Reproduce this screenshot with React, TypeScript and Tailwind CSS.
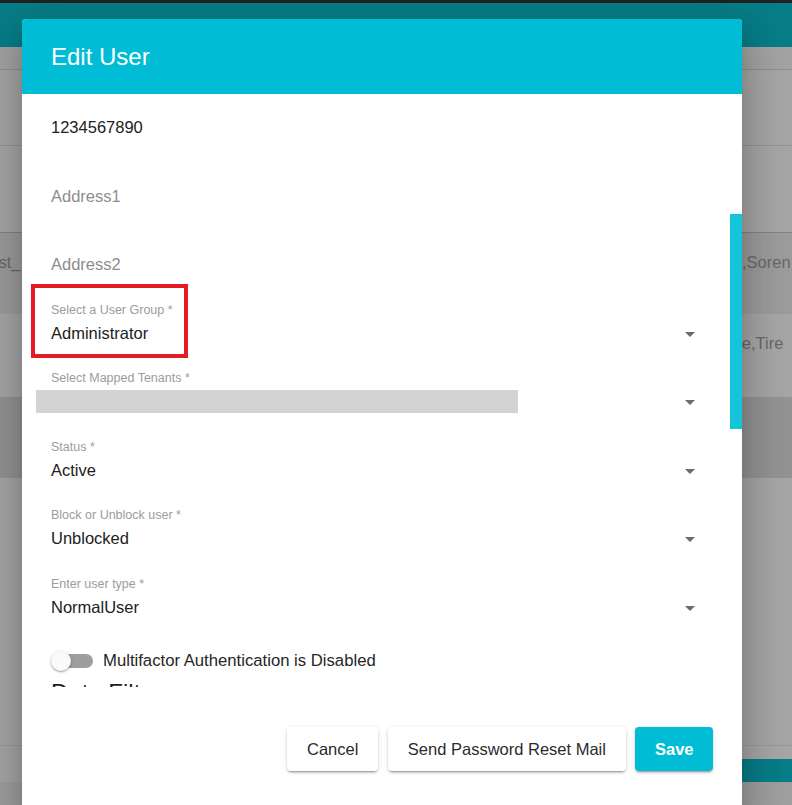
import React from 'react';

type Field = {
  label?: string;
  value: string;
  placeholder?: boolean;
  select?: boolean;
  masked?: boolean;
};

const fields: Field[] = [
  { value: '1234567890' },
  { value: 'Address1', placeholder: true },
  { value: 'Address2', placeholder: true },
  { label: 'Select a User Group *', value: 'Administrator', select: true },
  { label: 'Select Mapped Tenants *', value: '', select: true, masked: true },
  { label: 'Status *', value: 'Active', select: true },
  { label: 'Block or Unblock user *', value: 'Unblocked', select: true },
  { label: 'Enter user type *', value: 'NormalUser', select: true },
];

const ArrowDrop = () => (
  <svg width="24" height="24" viewBox="0 0 24 24" className="shrink-0 mt-[2px]">
    <path d="M7 10l5 5 5-5z" fill="#6b6b6b" />
  </svg>
);

const FormField = ({ field }: { field: Field }) => (
  <div className="h-[68.5px] flex flex-col">
    <div className="h-[16px] text-[12.5px] leading-[16px] text-[#9c9c9c]">{field.label}</div>
    <div className="mt-[3px] h-[24px] flex items-center justify-between">
      {field.masked ? (
        <div className="-ml-[15px] w-[482px] h-[23px] bg-[#d2d3d4]" />
      ) : (
        <span className={`text-[16.5px] leading-[24px] ${field.placeholder ? 'text-[#8d8d8d]' : 'text-[#212121]'}`}>
          {field.value}
        </span>
      )}
      {field.select && <ArrowDrop />}
    </div>
  </div>
);

const PageRow = ({ left, right, leftShift, rightShift, className }: {
  left: string;
  right: string;
  leftShift: string;
  rightShift: string;
  className: string;
}) => (
  <div className={`flex text-[16.5px] leading-[20px] text-[#a2a2a2] pt-[19px] ${className}`}>
    <div className="w-[22px] overflow-hidden shrink-0">
      <span className={`block whitespace-nowrap ${leftShift}`}>{left}</span>
    </div>
    <div className="flex-1" />
    <div className="w-[50px] overflow-hidden shrink-0">
      <span className={`block whitespace-nowrap ${rightShift}`}>{right}</span>
    </div>
  </div>
);

export default function App() {
  return (
    <div className="relative h-[805px] w-full overflow-hidden bg-white font-['Liberation_Sans',Arial,sans-serif]">
      {/* page behind the dialog */}
      <div className="flex flex-col">
        <div className="h-[3px] bg-[#2f3630]" />
        <div className="h-[44px] bg-[#0cc0d2]" />
        <div className="h-[23px] bg-[#fbfbfb] border-b border-[#dcdcdc]" />
        <div className="h-[76px] border-b border-[#e2e2e2]" />
        <div className="h-[87px] border-b border-[#c9c9c9]" />
        <PageRow left="Test_" right=",Soren" leftShift="-ml-[19px]" rightShift="" className="h-[81px] bg-[#f0f0f0]" />
        <PageRow left="" right="Kate,Tire" leftShift="" rightShift="-ml-[25px]" className="h-[83px] bg-white" />
        <div className="h-[81px] bg-[#e2e2e2]" />
        <div className="h-[268px] border-b border-[#ececec]" />
        <div className="h-[13px]" />
        <div className="h-[23px] flex justify-end">
          <div className="w-[320px] bg-[#0cc0d2]" />
        </div>
        <div className="h-[23px] bg-[#f4f4f4]" />
      </div>

      {/* backdrop */}
      <div className="absolute inset-0 bg-black/35" />

      {/* dialog */}
      <div className="absolute left-[22px] top-[19px] w-[720px] h-[800px] flex flex-col bg-white rounded-t-[4px] shadow-[0_11px_15px_-7px_rgba(0,0,0,0.2),0_24px_38px_3px_rgba(0,0,0,0.14),0_9px_46px_8px_rgba(0,0,0,0.12)]">
        <div className="h-[75px] shrink-0 flex items-center px-[29px] bg-[#00bcd4] rounded-t-[4px]">
          <h2 className="text-[24px] text-white">Edit User</h2>
        </div>

        <div className="relative h-[593px] shrink-0 overflow-hidden pl-[29px] pr-[40px] pt-[2px]">
          {fields.map((f, i) => (
            <FormField key={i} field={f} />
          ))}

          <div className="h-[33px] flex items-center">
            <div className="relative w-[44px] h-[24px] flex items-center">
              <div className="ml-[9px] w-[33px] h-[14px] rounded-full bg-[#9e9e9e]" />
              <div className="absolute left-0 top-[2px] w-[20px] h-[20px] rounded-full bg-[#fafafa] shadow-[0_1px_3px_rgba(0,0,0,0.3),0_1px_1px_rgba(0,0,0,0.14)]" />
            </div>
            <span className="ml-[8px] text-[16.7px] text-[#262626]">Multifactor Authentication is Disabled</span>
          </div>

          <h3 className="mt-[2px] text-[24px] leading-[28.8px] text-[#212121]">Data Filters</h3>

          {/* scroll thumb */}
          <div className="absolute right-0 top-[120px] w-[12px] h-[215px] bg-[#14c4d9]" />
        </div>

        <div className="flex justify-end gap-[9.5px] pt-[40px] pr-[29px]">
          <button className="h-[44px] px-[20px] rounded-[4px] bg-white text-[16.5px] text-[#2b2b2b] shadow-[0_3px_1px_-2px_rgba(0,0,0,0.2),0_2px_2px_0_rgba(0,0,0,0.14),0_1px_5px_0_rgba(0,0,0,0.12)]">
            Cancel
          </button>
          <button className="h-[44px] px-[20px] rounded-[4px] bg-white text-[16.5px] text-[#2b2b2b] shadow-[0_3px_1px_-2px_rgba(0,0,0,0.2),0_2px_2px_0_rgba(0,0,0,0.14),0_1px_5px_0_rgba(0,0,0,0.12)]">
            Send Password Reset Mail
          </button>
          <button className="h-[44px] px-[19.5px] rounded-[4px] bg-[#00bcd4] text-[16.5px] font-bold text-white shadow-[0_3px_1px_-2px_rgba(0,0,0,0.2),0_2px_2px_0_rgba(0,0,0,0.14),0_1px_5px_0_rgba(0,0,0,0.12)]">
            Save
          </button>
        </div>

        {/* highlight around the user group field */}
        <div className="absolute left-[9px] top-[265px] w-[157px] h-[74px] border-4 border-[#e31b23]" />
      </div>
    </div>
  );
}
